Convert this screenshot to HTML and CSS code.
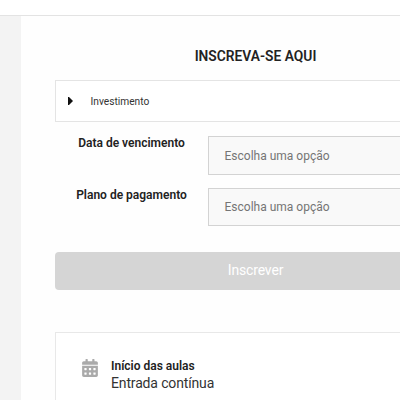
FILE: index.html
```
<!DOCTYPE html>
<html lang="pt-BR">
<head>
<meta charset="utf-8">
<title>Inscreva-se</title>
<link rel="stylesheet" href="styles.css">
</head>
<body>
<header class="topbar"></header>
<main class="page">
  <section class="panel">
    <h1 class="title"><span>INSCREVA-SE AQUI</span></h1>
    <div class="accordion">
      <svg class="caret" width="5" height="8" viewBox="0 0 5 8"><path d="M0 0H1L5 4L1 8H0Z" fill="#111"/></svg>
      <span>Investimento</span>
    </div>
    <div class="field">
      <div class="label"><span>Data de vencimento</span></div>
      <div class="select"><span>Escolha uma opção</span></div>
    </div>
    <div class="field second">
      <div class="label"><span>Plano de pagamento</span></div>
      <div class="select"><span>Escolha uma opção</span></div>
    </div>
    <button class="submit"><span>Inscrever</span></button>
    <div class="info">
      <svg class="calendar" width="16" height="18" viewBox="0 0 448 512"><path fill="#aaa" d="M0 464c0 26.500 21.500 48 48 48h352c26.500 0 48-21.500 48-48V192H0v272zm320-196c0-6.600 5.400-12 12-12h40c6.600 0 12 5.400 12 12v40c0 6.600-5.400 12-12 12h-40c-6.600 0-12-5.400-12-12v-40zm0 128c0-6.600 5.400-12 12-12h40c6.600 0 12 5.400 12 12v40c0 6.600-5.400 12-12 12h-40c-6.600 0-12-5.400-12-12v-40zM192 268c0-6.600 5.400-12 12-12h40c6.600 0 12 5.400 12 12v40c0 6.600-5.400 12-12 12h-40c-6.600 0-12-5.400-12-12v-40zm0 128c0-6.600 5.400-12 12-12h40c6.600 0 12 5.400 12 12v40c0 6.600-5.400 12-12 12h-40c-6.600 0-12-5.400-12-12v-40zM64 268c0-6.600 5.400-12 12-12h40c6.600 0 12 5.400 12 12v40c0 6.600-5.400 12-12 12H76c-6.600 0-12-5.400-12-12v-40zm0 128c0-6.600 5.400-12 12-12h40c6.600 0 12 5.400 12 12v40c0 6.600-5.400 12-12 12H76c-6.600 0-12-5.400-12-12v-40zM400 64h-48V16c0-8.800-7.200-16-16-16h-32c-8.800 0-16 7.200-16 16v48H160V16c0-8.800-7.200-16-16-16h-32c-8.800 0-16 7.200-16 16v48H48C21.500 64 0 85.500 0 112v48h448v-48c0-26.500-21.500-48-48-48z"/></svg>
      <div>
        <div class="info-title"><span>Início das aulas</span></div>
        <div class="info-text"><span>Entrada contínua</span></div>
      </div>
    </div>
  </section>
</main>
</body>
</html>
```
FILE: styles.css
```
* { box-sizing: border-box; }
body {
  margin: 0;
  height: 400px;
  overflow: hidden;
  background: #f3f3f3;
  color: #222;
  font-family: Roboto, "Liberation Sans", sans-serif;
}
.topbar { height: 16px; background: #fff; border-bottom: 1px solid #e3e3e3; }
.page { padding-left: 21px; }
.panel {
  width: 469px;
  height: 384px;
  padding: 30px 34px 0;
  background: #fefefe;
}
.title { margin: 0; height: 34px; font-size: 13.8px; line-height: 20px; font-weight: 600; text-align: center; }
.accordion {
  height: 42px;
  display: flex;
  align-items: center;
  padding-left: 12px;
  border: 1px solid #e4e4e4;
  background: #fff;
  font-size: 10.2px;
  color: #333;
}
.caret { margin-right: 17.500px; }
.field { display: flex; margin-top: 14px; }
.second { margin-top: 13px; }
.label { width: 153px; font-size: 12px; line-height: 14px; font-weight: 600; text-align: center; }
.select {
  flex: 1;
  height: 39px;
  padding-left: 15.500px;
  border: 1px solid #d3d3d3;
  background: #f9f9f9;
  color: #757575;
  font-size: 12px;
  line-height: 38px;
}
.second .select { height: 38px; line-height: 36px; }
.submit {
  display: block;
  width: 100%;
  height: 38px;
  margin: 26px 0 42px;
  padding: 0 0 2px;
  border: 0;
  border-radius: 4px;
  background: #d5d5d5;
  color: #fff;
  font: 14px Roboto, sans-serif;
  letter-spacing: -0.15px;
}
.info { display: flex; height: 100px; padding: 25px 26px; border: 1px solid #e8e8e8; background: #fff; }
.calendar { margin: 1px 13px 0 0; }
.info-title { font-size: 12px; line-height: 16px; font-weight: 600; }
.info-text { font-size: 14px; line-height: 18px; letter-spacing: -0.15px; color: #333; }
```
